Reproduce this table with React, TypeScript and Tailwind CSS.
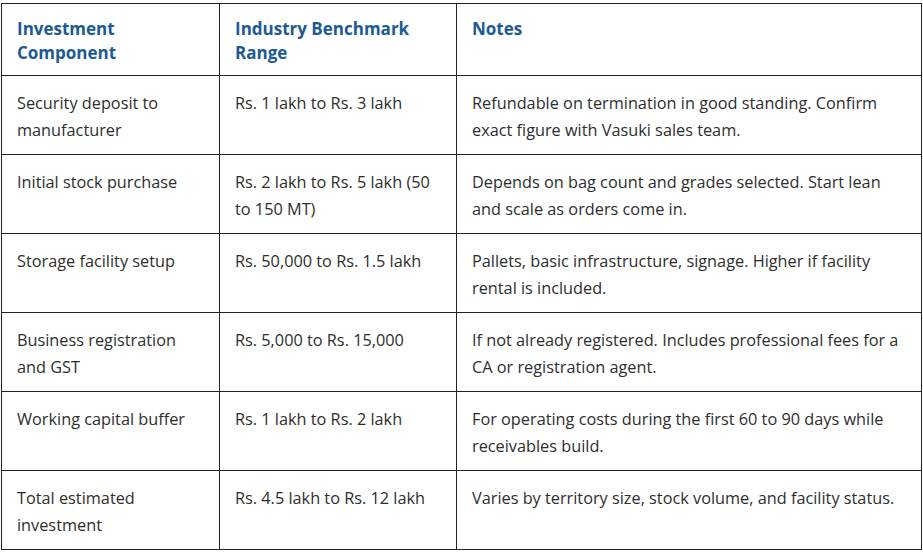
import React from "react";

const rows: [string, string, string][] = [
  [
    "Security deposit to manufacturer",
    "Rs. 1 lakh to Rs. 3 lakh",
    "Refundable on termination in good standing. Confirm exact figure with Vasuki sales team.",
  ],
  [
    "Initial stock purchase",
    "Rs. 2 lakh to Rs. 5 lakh (50 to 150 MT)",
    "Depends on bag count and grades selected. Start lean and scale as orders come in.",
  ],
  [
    "Storage facility setup",
    "Rs. 50,000 to Rs. 1.5 lakh",
    "Pallets, basic infrastructure, signage. Higher if facility rental is included.",
  ],
  [
    "Business registration and GST",
    "Rs. 5,000 to Rs. 15,000",
    "If not already registered. Includes professional fees for a CA or registration agent.",
  ],
  [
    "Working capital buffer",
    "Rs. 1 lakh to Rs. 2 lakh",
    "For operating costs during the first 60 to 90 days while receivables build.",
  ],
  [
    "Total estimated investment",
    "Rs. 4.5 lakh to Rs. 12 lakh",
    "Varies by territory size, stock volume, and facility status.",
  ],
];

export default function App() {
  return (
    <div className="w-[923px] h-[553px] bg-white pt-[3px] pl-[1px]">
      <table
        className="w-[920px] border-collapse table-fixed text-[#2e2e2e]"
        style={{ fontFamily: '"Open Sans", "Noto Sans", sans-serif' }}
      >
        <colgroup>
          <col className="w-[218px]" />
          <col className="w-[237px]" />
          <col className="w-[465px]" />
        </colgroup>
        <thead>
          <tr className="h-[72px]">
            {["Investment Component", "Industry Benchmark Range", "Notes"].map((h) => (
              <th
                key={h}
                className="border border-[#222222] align-top text-left font-bold text-[17px] leading-[24px] text-[#1d5a94] pl-[15px] pr-[15px] pt-[13px]"
              >
                {h}
              </th>
            ))}
          </tr>
        </thead>
        <tbody>
          {rows.map((r) => (
            <tr key={r[0]} className="h-[79px]">
              {r.map((c, i) => (
                <td
                  key={i}
                  className="border border-[#222222] align-top text-[16.3px] leading-[27px] pl-[15px] pr-[15px] pt-[14px]"
                >
                  {c}
                </td>
              ))}
            </tr>
          ))}
        </tbody>
      </table>
    </div>
  );
}
